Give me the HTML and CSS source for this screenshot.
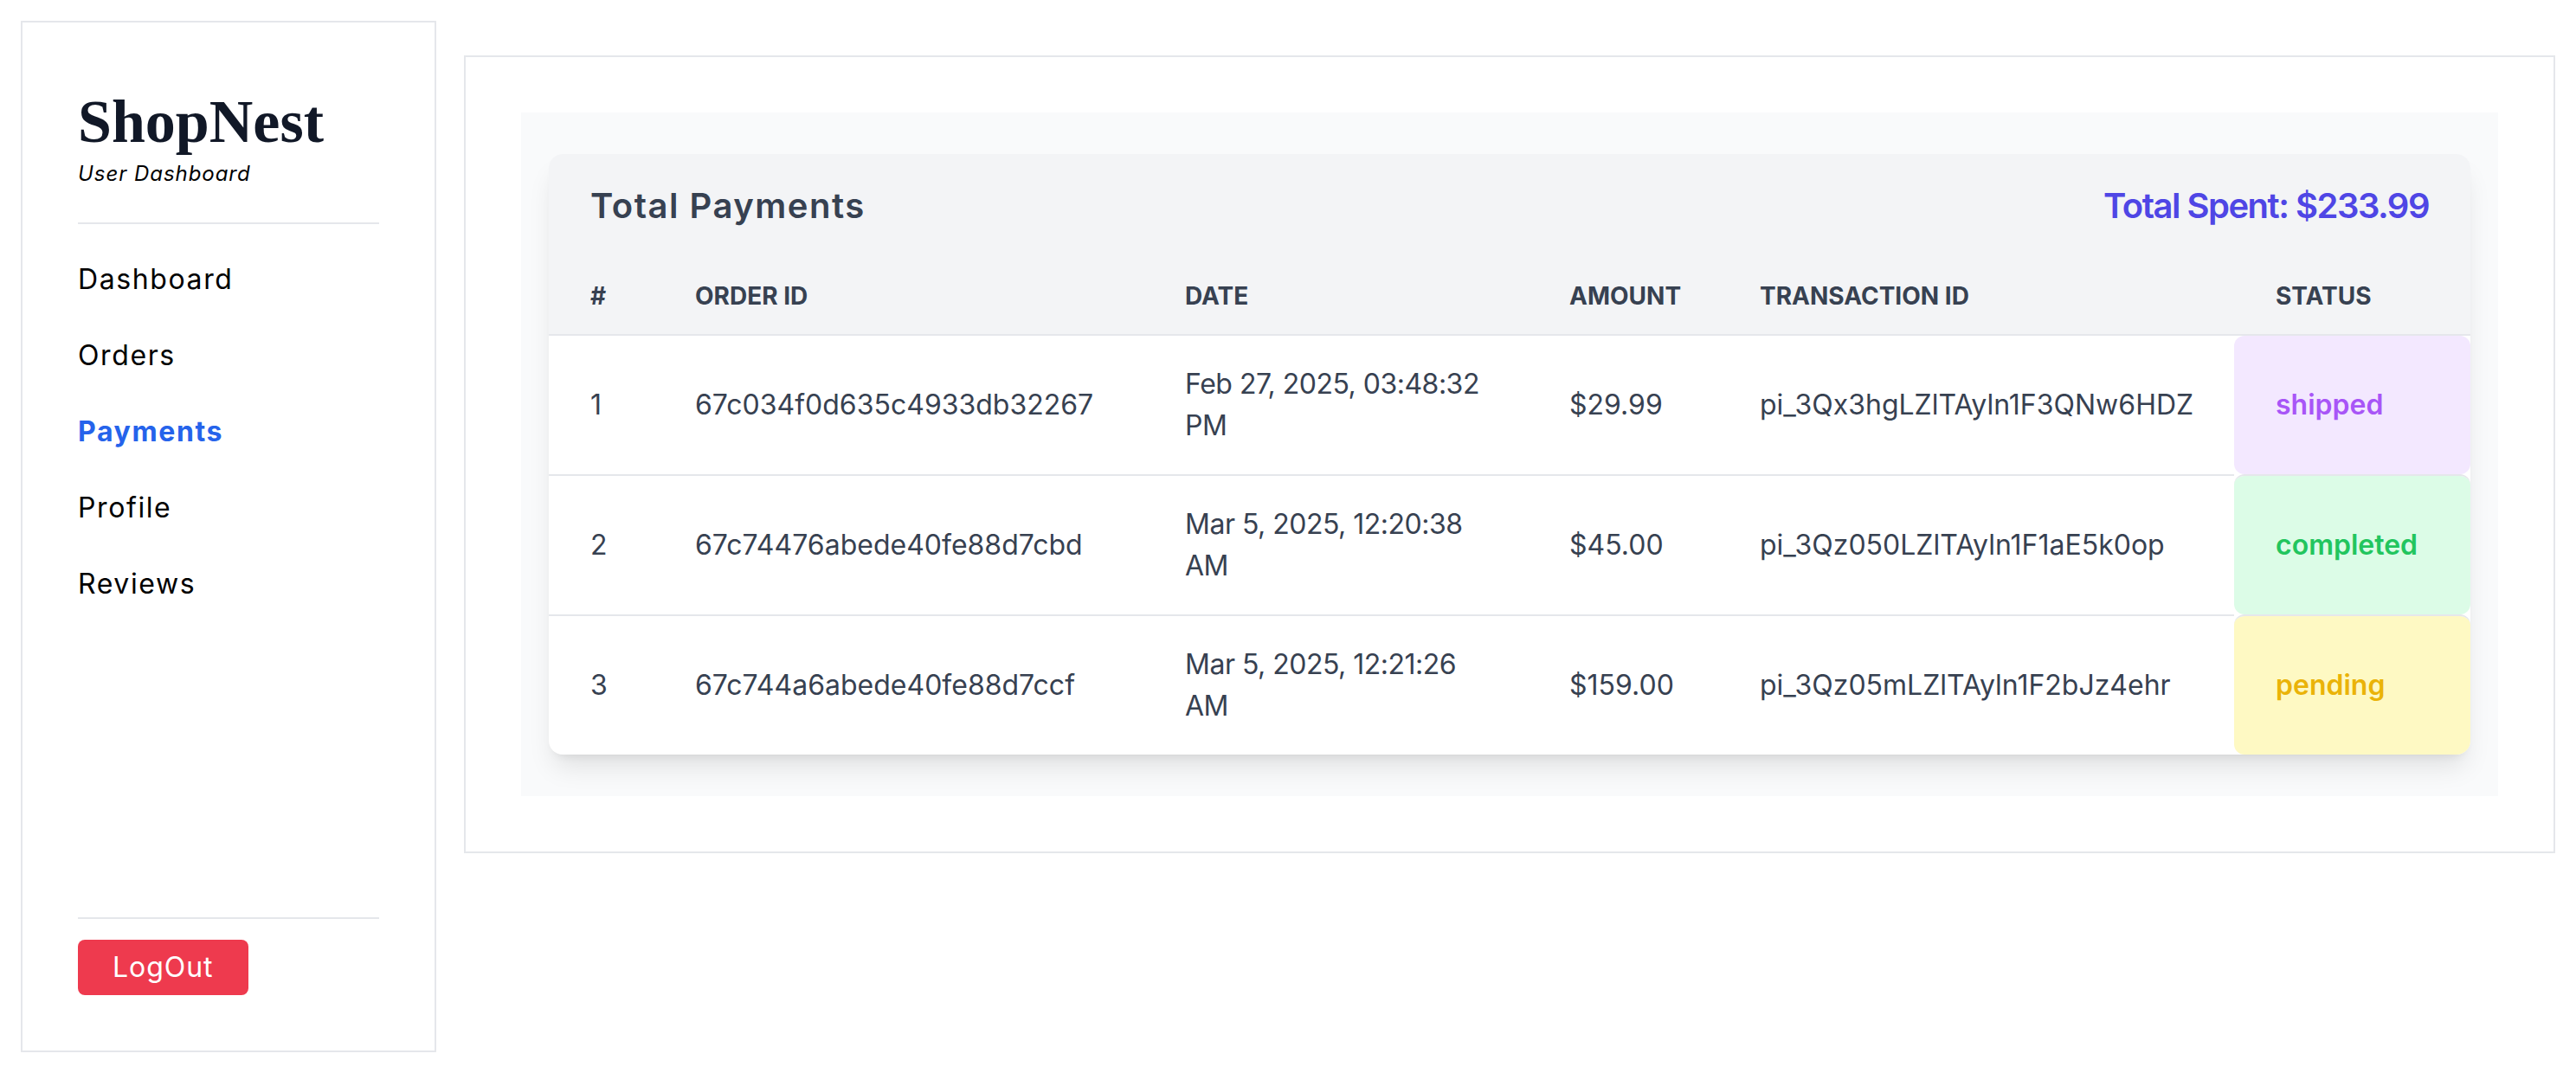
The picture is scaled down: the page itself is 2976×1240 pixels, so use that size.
FILE: index.html
```html
<!DOCTYPE html>
<html lang="en">
<head>
<meta charset="utf-8">
<title>ShopNest – Payments</title>
<link rel="stylesheet" href="styles.css">
</head>
<body>
<div class="layout">
  <aside class="sidebar">
    <div class="sidebar-top">
      <div class="brand-block">
        <h1 class="brand">ShopNest</h1>
        <p class="brand-sub">User Dashboard</p>
      </div>
      <nav class="nav">
        <a class="nav-link" href="#">Dashboard</a>
        <a class="nav-link" href="#">Orders</a>
        <a class="nav-link active" href="#">Payments</a>
        <a class="nav-link" href="#">Profile</a>
        <a class="nav-link" href="#">Reviews</a>
      </nav>
    </div>
    <div class="sidebar-bottom">
      <button class="logout" type="button">LogOut</button>
    </div>
  </aside>

  <main class="main">
    <section class="panel">
      <div class="card">
        <div class="card-head">
          <h2 class="card-title">Total Payments</h2>
          <span class="total">Total Spent: $233.99</span>
        </div>
        <table class="pay-table">
          <colgroup>
            <col class="c-num">
            <col class="c-order">
            <col class="c-date">
            <col class="c-amount">
            <col class="c-txn">
            <col class="c-status">
          </colgroup>
          <thead>
            <tr>
              <th>#</th>
              <th>Order ID</th>
              <th>Date</th>
              <th>Amount</th>
              <th>Transaction ID</th>
              <th>Status</th>
            </tr>
          </thead>
          <tbody>
            <tr>
              <td>1</td>
              <td>67c034f0d635c4933db32267</td>
              <td class="date"><span class="nowrap">Feb 27, 2025, 03:48:32</span> PM</td>
              <td>$29.99</td>
              <td>pi_3Qx3hgLZlTAyln1F3QNw6HDZ</td>
              <td class="status shipped">shipped</td>
            </tr>
            <tr>
              <td>2</td>
              <td>67c74476abede40fe88d7cbd</td>
              <td class="date"><span class="nowrap">Mar 5, 2025, 12:20:38</span> AM</td>
              <td>$45.00</td>
              <td>pi_3Qz050LZlTAyln1F1aE5k0op</td>
              <td class="status completed">completed</td>
            </tr>
            <tr>
              <td>3</td>
              <td>67c744a6abede40fe88d7ccf</td>
              <td class="date"><span class="nowrap">Mar 5, 2025, 12:21:26</span> AM</td>
              <td>$159.00</td>
              <td>pi_3Qz05mLZlTAyln1F2bJz4ehr</td>
              <td class="status pending">pending</td>
            </tr>
          </tbody>
        </table>
      </div>
    </section>
  </main>
</div>
</body>
</html>
```

FILE: styles.css
```css
* { box-sizing: border-box; }
html, body { margin: 0; }
body {
  font-family: Inter, "DejaVu Sans", sans-serif;
  background: #ffffff;
  color: #000000;
}

.layout {
  display: flex;
  align-items: flex-start;
  gap: 32px;
  padding: 24px;
}

/* Sidebar */
.sidebar {
  flex: none;
  width: 480px;
  height: 1192px;
  border: 2px solid #e5e7eb;
  padding: 64px;
  display: flex;
  flex-direction: column;
  justify-content: space-between;
}
.brand-block {
  padding-bottom: 40px;
  border-bottom: 2px solid #e5e7eb;
}
.brand {
  margin: 7px 0 0;
  font-family: "Liberation Serif", "Times New Roman", serif;
  font-weight: 700;
  font-size: 70px;
  line-height: 88px;
  color: #111827;
}
.brand-sub {
  margin: 0;
  font-style: italic;
  font-size: 24px;
  line-height: 32px;
  letter-spacing: 0.04em;
  color: #000;
}
.nav {
  display: flex;
  flex-direction: column;
  gap: 40px;
  margin-top: 40px;
}
.nav-link {
  font-size: 32px;
  line-height: 48px;
  color: #000;
  text-decoration: none;
  letter-spacing: 0.05em;
}
.nav-link.active {
  color: #2563eb;
  font-weight: 700;
}
.sidebar-bottom {
  border-top: 2px solid #e5e7eb;
  padding-top: 24px;
}
.logout {
  font-family: inherit;
  font-size: 32px;
  line-height: 48px;
  letter-spacing: 0.03em;
  padding: 8px 40px;
  background: #ee3a4e;
  color: #fff;
  border: 0;
  border-radius: 8px;
}

/* Main */
.main {
  flex: 1;
  margin-top: 40px;
  border: 2px solid #e5e7eb;
  padding: 64px;
}
.panel {
  background: #f9fafb;
  padding: 48px 32px;
}
.card {
  background: #fff;
  border-radius: 16px;
  overflow: hidden;
  box-shadow: 0 20px 30px -6px rgba(0,0,0,0.1), 0 8px 12px -8px rgba(0,0,0,0.1);
}
.card-head {
  display: flex;
  justify-content: space-between;
  align-items: center;
  padding: 32px 48px;
  background: #f3f4f6;
}
.card-title {
  margin: 0;
  font-size: 40px;
  line-height: 56px;
  font-weight: 600;
  letter-spacing: 1.5px;
  color: #374151;
}
.total {
  font-size: 40px;
  line-height: 56px;
  font-weight: 600;
  letter-spacing: -1.5px;
  color: #4f46e5;
}

.pay-table {
  width: 100%;
  border-collapse: separate;
  border-spacing: 0;
  table-layout: fixed;
}
.c-num { width: 121px; }
.c-order { width: 566px; }
.c-date { width: 444px; }
.c-amount { width: 220px; }
.c-txn { width: 596px; }
.c-status { width: 273px; }

.pay-table th {
  background: #f3f4f6;
  text-align: left;
  font-size: 28px;
  line-height: 40px;
  font-weight: 700;
  text-transform: uppercase;
  color: #374151;
  padding: 24px 48px;
  border-bottom: 2px solid #e5e7eb;
}
.pay-table td {
  padding: 32px 48px;
  font-size: 32px;
  line-height: 48px;
  color: #374151;
  vertical-align: middle;
}
.pay-table td.date { letter-spacing: -0.5px; }
.nowrap { white-space: nowrap; }
.pay-table tbody tr + tr td {
  border-top: 2px solid #e5e7eb;
}
.status {
  font-weight: 600;
  border-radius: 12px;
  background-clip: padding-box;
}
.pay-table td.shipped { background-color: #f3e8ff; color: #a855f7; }
.pay-table td.completed { background-color: #dcfce7; color: #22c55e; }
.pay-table td.pending { background-color: #fef9c3; color: #eab308; }
```
